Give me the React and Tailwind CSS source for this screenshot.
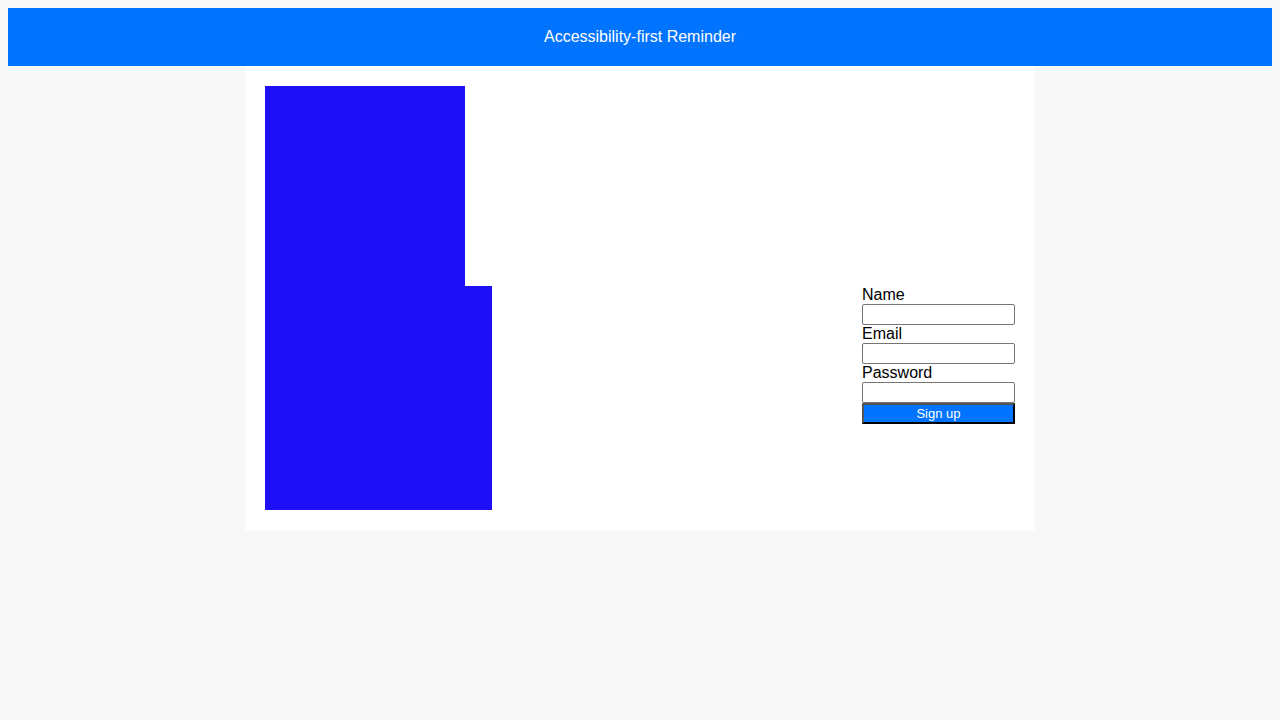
export default function App() {
  return (
    <div className="min-h-screen bg-[#f8f8f8] p-2 pb-0 font-['Liberation_Sans',Arial,sans-serif] text-black">
      <header className="flex h-[58px] items-center justify-center bg-[#0073ff] text-[16px] text-white">
        Accessibility-first Reminder
      </header>
      <main className="mx-auto w-[790px] bg-white p-5">
        <div className="h-[200px] w-[200px] bg-[#1e0ff6]" />
        <div className="flex items-start justify-between">
          <div className="h-[224px] w-[227px] bg-[#1e0ff6]" />
          <form className="flex w-[153px] flex-col text-[16px] leading-[18px]" onSubmit={(e) => e.preventDefault()}>
            <label htmlFor="name">Name</label>
            <input id="name" type="text" className="h-[21px] w-[153px] rounded-[2px] border border-[#767676] bg-white px-[2px] text-[13px]" />
            <label htmlFor="email">Email</label>
            <input id="email" type="email" className="h-[21px] w-[153px] rounded-[2px] border border-[#767676] bg-white px-[2px] text-[13px]" />
            <label htmlFor="password">Password</label>
            <input id="password" type="password" className="h-[21px] w-[153px] rounded-[2px] border border-[#767676] bg-white px-[2px] text-[13px]" />
            <button type="submit" className="flex h-[21px] w-[153px] items-center justify-center border-2 border-t-[#555555] border-l-[#555555] border-r-black border-b-black bg-[#0073ff] text-[13px] leading-none text-white">
              Sign up
            </button>
          </form>
        </div>
      </main>
    </div>
  );
}
